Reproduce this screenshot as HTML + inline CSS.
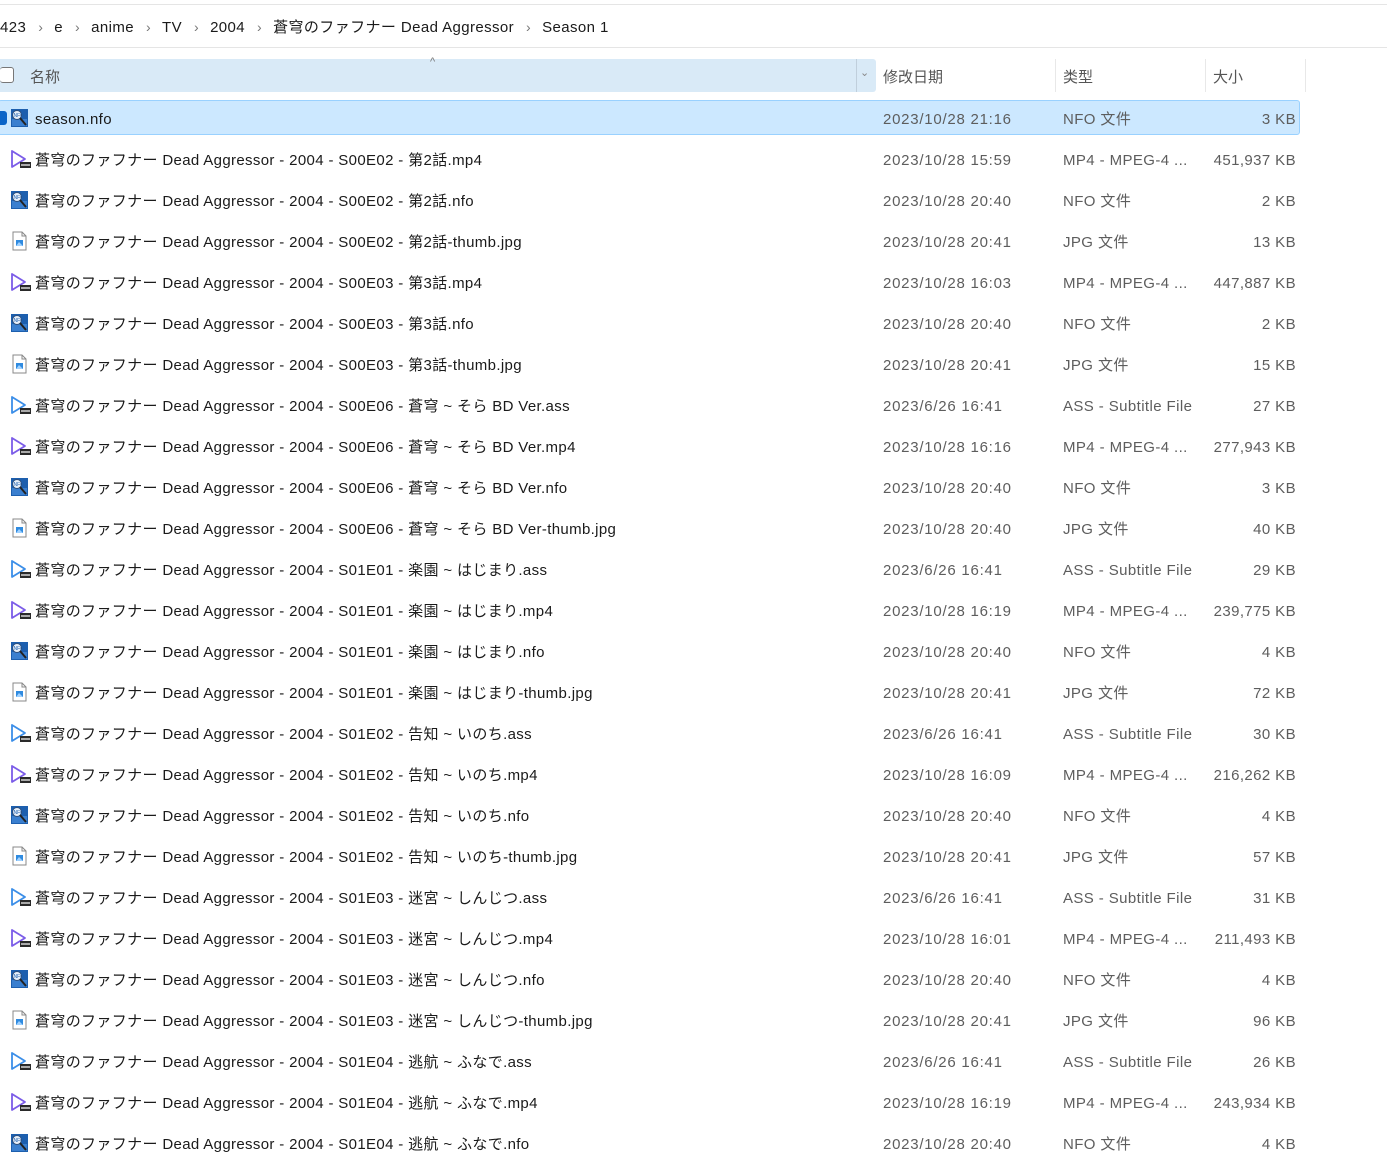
<!DOCTYPE html>
<html><head><meta charset="utf-8">
<style>
*{margin:0;padding:0;box-sizing:border-box}
body{width:1387px;height:1134px;overflow:hidden;background:#fff;font-family:"Liberation Sans","Noto Sans CJK SC",sans-serif;font-size:15px;color:#1a1a1a;position:relative}
.ab{position:absolute;white-space:nowrap}
.line{position:absolute;left:0;width:1387px;height:1px;background:#e5e5e5}
.crumb{top:16px;left:0;font-size:15px;color:#1a1a1a;letter-spacing:0.4px}
.crumb span.s{color:#777;margin:0 11px 0 12px;font-size:14px}
.hdr{position:absolute;top:59px;left:0;width:876px;height:33px;background:#d9eaf7;border-radius:0 3px 3px 0}
.hdr .dd{position:absolute;left:856px;top:0;width:1px;height:33px;background:#c0cfdc}
.ht{position:absolute;top:66px;color:#555;font-size:15px}
.sep{position:absolute;top:59px;width:1px;height:33px;background:#e8e8e8}
.sel{position:absolute;left:-2px;top:100px;width:1302px;height:35px;background:#cce8ff;border:1px solid #99d1ff;border-radius:3px}
.r{position:absolute;left:0;width:1300px;height:20px;margin-top:2px}
.r .ic{position:absolute;left:9px;top:-2px}
.r .n{position:absolute;left:35px;top:0;line-height:20px;letter-spacing:0.35px}
.r .d{position:absolute;left:883px;top:0;line-height:20px;color:#5d5d5d;letter-spacing:0.75px}
.r .t{position:absolute;left:1063px;top:0;line-height:20px;color:#5d5d5d;letter-spacing:0.4px}
.r .z{position:absolute;right:4px;top:0;line-height:20px;color:#5d5d5d;letter-spacing:0.4px}
</style></head><body>
<svg width="0" height="0" style="position:absolute">
<defs>
<g id="mp4"><path d="M3 2 L3 18 L16 10 Z" fill="none" stroke="#7b5ce8" stroke-width="1.8" stroke-linejoin="round"/><rect x="11" y="13" width="11" height="6" fill="#2a2a2a"/><rect x="12" y="15" width="9" height="2" fill="#aaa"/></g>
<g id="ass"><path d="M3 2 L3 18 L16 10 Z" fill="none" stroke="#3b8ee8" stroke-width="1.8" stroke-linejoin="round"/><rect x="11" y="13" width="11" height="6" fill="#2a2a2a"/><rect x="12" y="15" width="9" height="2" fill="#aaa"/></g>
<g id="nfo"><rect x="2" y="1" width="17" height="18" fill="#1d5fae"/><rect x="3" y="11" width="15" height="7" fill="#3a7fcf"/><circle cx="8" cy="7" r="4.5" fill="#e6eef8" stroke="#2d4e7a"/><text x="4.5" y="9" font-size="5" fill="#1d5fae" font-family="Liberation Sans">NFO</text><path d="M11 10 L17 17" stroke="#222" stroke-width="2"/></g>
<g id="jpg"><path d="M4 1 H13 L17 5 V19 H4 Z" fill="#fff" stroke="#888"/><path d="M13 1 V5 H17" fill="none" stroke="#888"/><rect x="7" y="9" width="7" height="6" fill="#2f8be0"/><path d="M7 15 L10 11 L14 15 Z" fill="#9fd1ff"/></g>
</defs></svg>

<div class="line" style="top:4px"></div>
<div class="ab crumb">423<span class="s">›</span>e<span class="s">›</span>anime<span class="s">›</span>TV<span class="s">›</span>2004<span class="s">›</span>蒼穹のファフナー Dead Aggressor<span class="s">›</span>Season 1</div>
<div class="line" style="top:47px"></div>

<div class="hdr"><div class="dd"></div></div>
<div class="ab" style="left:0;top:67px;width:14px;height:16px;border:1px solid #777;border-radius:3px;border-left:none;background:#fff"></div>
<div class="ht" style="left:30px">名称</div>
<div class="ab" style="left:430px;top:56px;color:#777;font-size:11px">^</div>
<div class="ab" style="left:860px;top:66px;color:#888;font-size:11px">⌄</div>
<div class="ht" style="left:883px">修改日期</div>
<div class="sep" style="left:1055px"></div>
<div class="ht" style="left:1063px">类型</div>
<div class="sep" style="left:1205px"></div>
<div class="ht" style="left:1213px">大小</div>
<div class="sep" style="left:1305px"></div>

<div class="sel"></div>
<div class="ab" style="left:0;top:111px;width:7px;height:14px;background:#0a64c8;border-radius:0 3px 3px 0"></div>

<div class="r" style="top:108px"><svg class="ic" width="22" height="20"><use href="#nfo"/></svg><span class="n">season.nfo</span><span class="d">2023/10/28 21:16</span><span class="t">NFO 文件</span><span class="z">3 KB</span></div>
<div class="r" style="top:149px"><svg class="ic" width="22" height="20"><use href="#mp4"/></svg><span class="n">蒼穹のファフナー Dead Aggressor - 2004 - S00E02 - 第2話.mp4</span><span class="d">2023/10/28 15:59</span><span class="t">MP4 - MPEG-4 ...</span><span class="z">451,937 KB</span></div>
<div class="r" style="top:190px"><svg class="ic" width="22" height="20"><use href="#nfo"/></svg><span class="n">蒼穹のファフナー Dead Aggressor - 2004 - S00E02 - 第2話.nfo</span><span class="d">2023/10/28 20:40</span><span class="t">NFO 文件</span><span class="z">2 KB</span></div>
<div class="r" style="top:231px"><svg class="ic" width="22" height="20"><use href="#jpg"/></svg><span class="n">蒼穹のファフナー Dead Aggressor - 2004 - S00E02 - 第2話-thumb.jpg</span><span class="d">2023/10/28 20:41</span><span class="t">JPG 文件</span><span class="z">13 KB</span></div>
<div class="r" style="top:272px"><svg class="ic" width="22" height="20"><use href="#mp4"/></svg><span class="n">蒼穹のファフナー Dead Aggressor - 2004 - S00E03 - 第3話.mp4</span><span class="d">2023/10/28 16:03</span><span class="t">MP4 - MPEG-4 ...</span><span class="z">447,887 KB</span></div>
<div class="r" style="top:313px"><svg class="ic" width="22" height="20"><use href="#nfo"/></svg><span class="n">蒼穹のファフナー Dead Aggressor - 2004 - S00E03 - 第3話.nfo</span><span class="d">2023/10/28 20:40</span><span class="t">NFO 文件</span><span class="z">2 KB</span></div>
<div class="r" style="top:354px"><svg class="ic" width="22" height="20"><use href="#jpg"/></svg><span class="n">蒼穹のファフナー Dead Aggressor - 2004 - S00E03 - 第3話-thumb.jpg</span><span class="d">2023/10/28 20:41</span><span class="t">JPG 文件</span><span class="z">15 KB</span></div>
<div class="r" style="top:395px"><svg class="ic" width="22" height="20"><use href="#ass"/></svg><span class="n">蒼穹のファフナー Dead Aggressor - 2004 - S00E06 - 蒼穹 ~ そら BD Ver.ass</span><span class="d">2023/6/26 16:41</span><span class="t">ASS - Subtitle File</span><span class="z">27 KB</span></div>
<div class="r" style="top:436px"><svg class="ic" width="22" height="20"><use href="#mp4"/></svg><span class="n">蒼穹のファフナー Dead Aggressor - 2004 - S00E06 - 蒼穹 ~ そら BD Ver.mp4</span><span class="d">2023/10/28 16:16</span><span class="t">MP4 - MPEG-4 ...</span><span class="z">277,943 KB</span></div>
<div class="r" style="top:477px"><svg class="ic" width="22" height="20"><use href="#nfo"/></svg><span class="n">蒼穹のファフナー Dead Aggressor - 2004 - S00E06 - 蒼穹 ~ そら BD Ver.nfo</span><span class="d">2023/10/28 20:40</span><span class="t">NFO 文件</span><span class="z">3 KB</span></div>
<div class="r" style="top:518px"><svg class="ic" width="22" height="20"><use href="#jpg"/></svg><span class="n">蒼穹のファフナー Dead Aggressor - 2004 - S00E06 - 蒼穹 ~ そら BD Ver-thumb.jpg</span><span class="d">2023/10/28 20:40</span><span class="t">JPG 文件</span><span class="z">40 KB</span></div>
<div class="r" style="top:559px"><svg class="ic" width="22" height="20"><use href="#ass"/></svg><span class="n">蒼穹のファフナー Dead Aggressor - 2004 - S01E01 - 楽園 ~ はじまり.ass</span><span class="d">2023/6/26 16:41</span><span class="t">ASS - Subtitle File</span><span class="z">29 KB</span></div>
<div class="r" style="top:600px"><svg class="ic" width="22" height="20"><use href="#mp4"/></svg><span class="n">蒼穹のファフナー Dead Aggressor - 2004 - S01E01 - 楽園 ~ はじまり.mp4</span><span class="d">2023/10/28 16:19</span><span class="t">MP4 - MPEG-4 ...</span><span class="z">239,775 KB</span></div>
<div class="r" style="top:641px"><svg class="ic" width="22" height="20"><use href="#nfo"/></svg><span class="n">蒼穹のファフナー Dead Aggressor - 2004 - S01E01 - 楽園 ~ はじまり.nfo</span><span class="d">2023/10/28 20:40</span><span class="t">NFO 文件</span><span class="z">4 KB</span></div>
<div class="r" style="top:682px"><svg class="ic" width="22" height="20"><use href="#jpg"/></svg><span class="n">蒼穹のファフナー Dead Aggressor - 2004 - S01E01 - 楽園 ~ はじまり-thumb.jpg</span><span class="d">2023/10/28 20:41</span><span class="t">JPG 文件</span><span class="z">72 KB</span></div>
<div class="r" style="top:723px"><svg class="ic" width="22" height="20"><use href="#ass"/></svg><span class="n">蒼穹のファフナー Dead Aggressor - 2004 - S01E02 - 告知 ~ いのち.ass</span><span class="d">2023/6/26 16:41</span><span class="t">ASS - Subtitle File</span><span class="z">30 KB</span></div>
<div class="r" style="top:764px"><svg class="ic" width="22" height="20"><use href="#mp4"/></svg><span class="n">蒼穹のファフナー Dead Aggressor - 2004 - S01E02 - 告知 ~ いのち.mp4</span><span class="d">2023/10/28 16:09</span><span class="t">MP4 - MPEG-4 ...</span><span class="z">216,262 KB</span></div>
<div class="r" style="top:805px"><svg class="ic" width="22" height="20"><use href="#nfo"/></svg><span class="n">蒼穹のファフナー Dead Aggressor - 2004 - S01E02 - 告知 ~ いのち.nfo</span><span class="d">2023/10/28 20:40</span><span class="t">NFO 文件</span><span class="z">4 KB</span></div>
<div class="r" style="top:846px"><svg class="ic" width="22" height="20"><use href="#jpg"/></svg><span class="n">蒼穹のファフナー Dead Aggressor - 2004 - S01E02 - 告知 ~ いのち-thumb.jpg</span><span class="d">2023/10/28 20:41</span><span class="t">JPG 文件</span><span class="z">57 KB</span></div>
<div class="r" style="top:887px"><svg class="ic" width="22" height="20"><use href="#ass"/></svg><span class="n">蒼穹のファフナー Dead Aggressor - 2004 - S01E03 - 迷宮 ~ しんじつ.ass</span><span class="d">2023/6/26 16:41</span><span class="t">ASS - Subtitle File</span><span class="z">31 KB</span></div>
<div class="r" style="top:928px"><svg class="ic" width="22" height="20"><use href="#mp4"/></svg><span class="n">蒼穹のファフナー Dead Aggressor - 2004 - S01E03 - 迷宮 ~ しんじつ.mp4</span><span class="d">2023/10/28 16:01</span><span class="t">MP4 - MPEG-4 ...</span><span class="z">211,493 KB</span></div>
<div class="r" style="top:969px"><svg class="ic" width="22" height="20"><use href="#nfo"/></svg><span class="n">蒼穹のファフナー Dead Aggressor - 2004 - S01E03 - 迷宮 ~ しんじつ.nfo</span><span class="d">2023/10/28 20:40</span><span class="t">NFO 文件</span><span class="z">4 KB</span></div>
<div class="r" style="top:1010px"><svg class="ic" width="22" height="20"><use href="#jpg"/></svg><span class="n">蒼穹のファフナー Dead Aggressor - 2004 - S01E03 - 迷宮 ~ しんじつ-thumb.jpg</span><span class="d">2023/10/28 20:41</span><span class="t">JPG 文件</span><span class="z">96 KB</span></div>
<div class="r" style="top:1051px"><svg class="ic" width="22" height="20"><use href="#ass"/></svg><span class="n">蒼穹のファフナー Dead Aggressor - 2004 - S01E04 - 逃航 ~ ふなで.ass</span><span class="d">2023/6/26 16:41</span><span class="t">ASS - Subtitle File</span><span class="z">26 KB</span></div>
<div class="r" style="top:1092px"><svg class="ic" width="22" height="20"><use href="#mp4"/></svg><span class="n">蒼穹のファフナー Dead Aggressor - 2004 - S01E04 - 逃航 ~ ふなで.mp4</span><span class="d">2023/10/28 16:19</span><span class="t">MP4 - MPEG-4 ...</span><span class="z">243,934 KB</span></div>
<div class="r" style="top:1133px"><svg class="ic" width="22" height="20"><use href="#nfo"/></svg><span class="n">蒼穹のファフナー Dead Aggressor - 2004 - S01E04 - 逃航 ~ ふなで.nfo</span><span class="d">2023/10/28 20:40</span><span class="t">NFO 文件</span><span class="z">4 KB</span></div>
</body></html>
